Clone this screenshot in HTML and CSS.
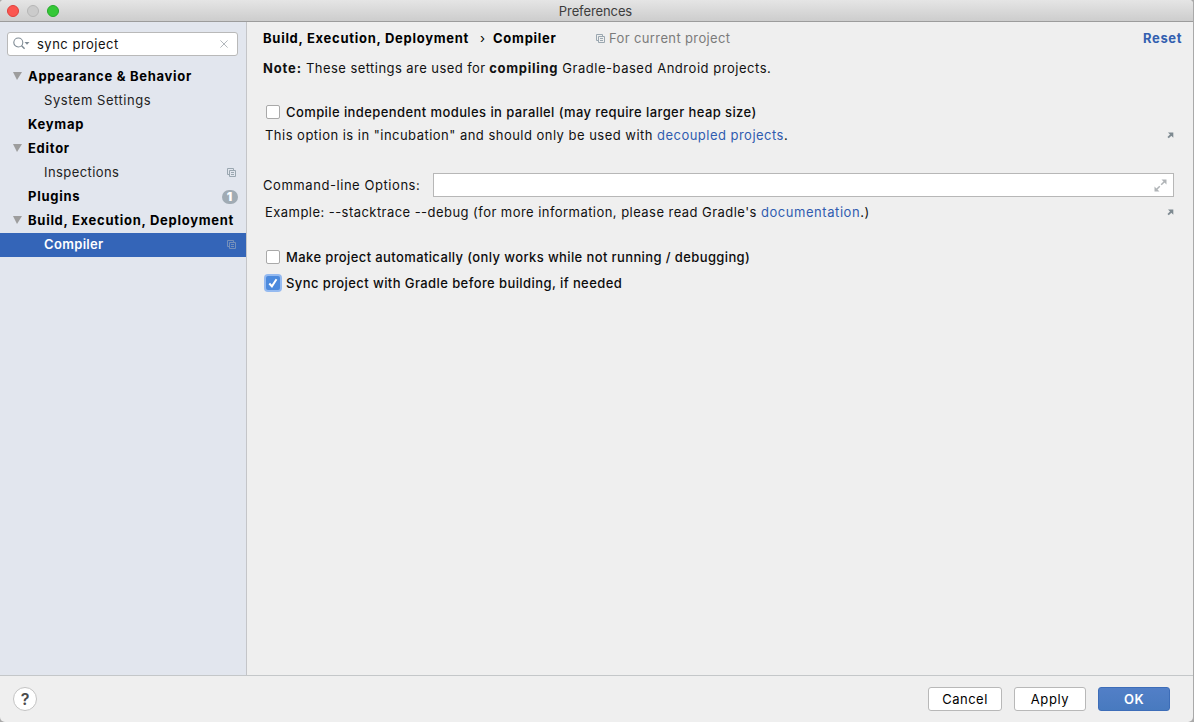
FILE: index.html
```html
<!DOCTYPE html>
<html lang="en">
<head>
<meta charset="utf-8">
<title>Preferences</title>
<link rel="stylesheet" href="styles.css">
</head>
<body>
<svg class="defs" width="0" height="0" aria-hidden="true">
  <symbol id="copy" viewBox="0 0 9 9"><path d="M2 6.500H.5V.5h6V2M2.500 2.500h6v6h-6zM4 4.500h3M4 6.500h3" fill="none" stroke="currentColor"/></symbol>
  <symbol id="arrow" viewBox="0 0 7 7"><path d="M1 .5H6.300V5.800z" fill="currentColor"/><path d="M4.500 2.300L1.100 5.700" stroke="currentColor" stroke-width="1.900"/></symbol>
</svg>
<div class="window">
  <header class="titlebar">
    <div class="lights"><i class="light red"></i><i class="light gray"></i><i class="light green"></i></div>
    <span class="title">Preferences</span>
  </header>
  <div class="body">
    <aside class="sidebar">
      <div class="search">
        <svg class="glass" width="17" height="14" viewBox="0 0 17 14"><circle cx="5.300" cy="5.500" r="4.500" fill="none" stroke="#7f8b95" stroke-width="1.100"/><path d="M8.600 8.800l3 3" stroke="#7f8b95" stroke-width="1.500"/><path d="M11.500 5h5l-2.500 2.800z" fill="#7f8b95"/></svg>
        <span class="query">sync project</span>
        <svg class="clear" width="8" height="8" viewBox="0 0 8 8"><path d="M.4.4l7.200 7.200M7.600.4L.4 7.600" stroke="#b3b8bd"/></svg>
      </div>
      <nav class="tree">
        <div class="row group"><i class="tri"></i><span>Appearance &amp; Behavior</span></div>
        <div class="row leaf"><span class="t-sys">System Settings</span></div>
        <div class="row group"><i class="tri none"></i><span>Keymap</span></div>
        <div class="row group"><i class="tri"></i><span>Editor</span></div>
        <div class="row leaf"><span class="t-ins">Inspections</span><svg class="copy"><use href="#copy"/></svg></div>
        <div class="row group"><i class="tri none"></i><span>Plugins</span><b class="badge">1</b></div>
        <div class="row group"><i class="tri"></i><span>Build, Execution, Deployment</span></div>
        <div class="row leaf selected"><span class="t-com">Compiler</span><svg class="copy"><use href="#copy"/></svg></div>
      </nav>
    </aside>
    <main class="content">
      <div class="crumbs">
        <b>Build, Execution, Deployment</b><span class="sep">›</span><b>Compiler</b>
        <svg class="copy"><use href="#copy"/></svg><span class="scope">For current project</span>
        <b class="reset">Reset</b>
      </div>
      <p class="note"><b class="n-note">Note:</b> <span class="n-a">These settings are used for</span> <b class="n-b">compiling</b> <span class="n-c">Gradle-based Android projects.</span></p>
      <label class="check first"><i class="box"></i><span>Compile independent modules in parallel (may require larger heap size)</span></label>
      <div class="hint h-1"><span>This option is in "incubation" and should only be used with <a>decoupled projects</a>.</span><svg class="arrow"><use href="#arrow"/></svg></div>
      <div class="options"><span class="o-label">Command-line Options:</span>
        <div class="field"><svg width="13" height="13" viewBox="0 0 13 13" fill="#b0b4b7" stroke="#b0b4b7"><path stroke="none" d="M7.500.5h5v5zM.5 7.500v5h5z"/><path stroke-width="1.500" d="M10.800 2.200L7.200 5.800M2.200 10.800l3.600-3.600"/></svg></div></div>
      <div class="hint h-2"><span>Example: --stacktrace --debug (for more information, please read Gradle's <a>documentation</a>.)</span><svg class="arrow"><use href="#arrow"/></svg></div>
      <label class="check second"><i class="box"></i><span>Make project automatically (only works while not running / debugging)</span></label>
      <label class="check third"><i class="box on"><svg width="14" height="14" viewBox="0 0 14 14"><path d="M3.300 7.500l2.600 2.800 4.600-7" fill="none" stroke="#fff" stroke-width="2"/></svg></i><span>Sync project with Gradle before building, if needed</span></label>
    </main>
  </div>
  <footer class="footer">
    <span class="help">?</span>
    <div class="buttons"><span class="btn cancel">Cancel</span><span class="btn apply">Apply</span><span class="btn ok">OK</span></div>
  </footer>
</div>
</body>
</html>
```
FILE: styles.css
```css
* { box-sizing: border-box; }
body { margin: 0; font: 13px/20px Inter, "Liberation Sans", sans-serif; color: #111; background: #a9a9a9; letter-spacing: .5px; white-space: nowrap; }
.defs { position: absolute; }
.window { width: 1193px; height: 722px; display: flex; flex-direction: column; background: #efefef; overflow: hidden; border-radius: 4px 4px 5px 5px; }
.titlebar { height: 22px; flex: none; display: grid; grid-template-columns: 1fr auto 1fr; align-items: center; background: linear-gradient(#e5e5e5, #cdcdcd); border-bottom: 1px solid #9c9c9c; }
.lights { display: flex; gap: 8px; padding-left: 7px; }
.light { width: 12px; height: 12px; border-radius: 50%; border: 1px solid; }
.red { background: #fb5650; border-color: #df403b; }
.gray { background: #cbcbcb; border-color: #b6b6b6; }
.green { background: #35c837; border-color: #24a92a; }
.title { grid-column: 2; color: #3d3d3d; letter-spacing: -.1px; margin-left: -2px; padding-top: 1px; }
.body { flex: 1; display: flex; }
.sidebar { width: 247px; background: #e2e6ee; border-right: 1px solid #c4c5c8; padding-top: 10px; }
.search { margin: 0 8px 9px 7px; height: 24px; background: #fff; border: 1px solid #b9b9b9; border-radius: 3px; display: flex; align-items: center; padding: 0 9px 0 5px; }
.query { margin-left: 7px; flex: 1; }
.row { height: 24px; display: flex; align-items: center; padding: 0 10px 2px 0; }
.group { padding-left: 13px; font-weight: 700; color: #000; letter-spacing: .72px; }
.leaf { padding-left: 44px; color: #222; }
.t-sys { letter-spacing: .54px; }
.t-ins { letter-spacing: .42px; }
.t-com { letter-spacing: .33px; }
.tri { border: solid transparent; border-width: 8px 5px 0 4px; border-top-color: #9d9d9d; margin-right: 6px; }
.none { visibility: hidden; }
.copy { width: 9px; height: 9px; color: #9aa7b0; }
.row .copy { margin-left: auto; }
.selected { background: #3465b8; color: #fff; font-weight: 600; }
.selected .copy { color: #7590bb; }
.badge { margin: 2px -2px 0 auto; width: 16px; height: 14px; border-radius: 7px; background: #a0abb4; color: #fff; font-size: 12px; line-height: 14px; padding-right: 1px; text-align: center; letter-spacing: 0; }
.content { flex: 1; padding: 6px 10px 0 16px; }
.crumbs { height: 20px; display: flex; align-items: center; color: #000; }
.crumbs b { letter-spacing: .72px; }
.sep { margin: 0 7.500px 0 11px; }
.crumbs .copy { margin-left: 39.500px; }
.crumbs .scope { margin-left: 4px; color: #7b7b7b; letter-spacing: .37px; }
.crumbs .reset { margin: 0 1px 0 auto; color: #335fb0; letter-spacing: .6px; }
.note { margin: 10px 0 0; }
.n-note { letter-spacing: .85px; }
.n-a { letter-spacing: .44px; }
.n-b { letter-spacing: .7px; margin-left: -.6px; }
.n-c { letter-spacing: .53px; }
.check { display: flex; align-items: center; height: 20px; padding-left: 3px; font-weight: 500; color: #0c0c0c; letter-spacing: .41px; }
.box { width: 14px; height: 14px; margin-right: 6px; background: #fff; border: 1px solid #a9a9a9; border-radius: 2px; }
.on { border: 0; background: #4c8add; box-shadow: 0 0 0 2px #95baf0; }
.on svg { display: block; }
.first { margin-top: 24px; }
.hint { height: 20px; margin-top: 3px; padding: 0 9px 0 2px; display: flex; align-items: center; justify-content: space-between; }
.hint a { color: #305cb0; }
.h-1 { letter-spacing: .475px; }
.arrow { width: 7px; height: 7px; color: #7e8a91; }
.options { display: flex; align-items: center; margin: 28px 9px 0 0; height: 24px; }
.o-label { width: 170px; letter-spacing: .56px; }
.field { flex: 1; height: 24px; background: #fff; border: 1px solid #b7b7b7; display: flex; align-items: center; justify-content: flex-end; padding-right: 6px; }
.h-2 { margin-top: 5px; letter-spacing: .45px; }
.h-2 a { letter-spacing: .56px; }
.second { margin-top: 25px; letter-spacing: .385px; }
.third { margin-top: 6px; }
.footer { height: 47px; flex: none; border-top: 1px solid #c4c7c9; display: flex; align-items: center; justify-content: space-between; padding: 0 23px 0 13px; }
.help { width: 24px; height: 24px; border: 1.500px solid #c3c3c3; border-radius: 50%; background: #fff; color: #4b4b4b; font-size: 16px; line-height: 22px; font-weight: 600; text-align: center; letter-spacing: 0; }
.buttons { display: flex; gap: 12px; }
.btn { width: 72px; height: 24px; border: 1px solid #b8b8b8; border-radius: 3px; background: #fff; text-align: center; line-height: 23px; color: #000; }
.cancel { width: 74px; }
.apply { letter-spacing: .65px; }
.ok { color: #fff; background: linear-gradient(#527fc7, #487abf); border-color: #3d6db8; font-weight: 600; }
```
